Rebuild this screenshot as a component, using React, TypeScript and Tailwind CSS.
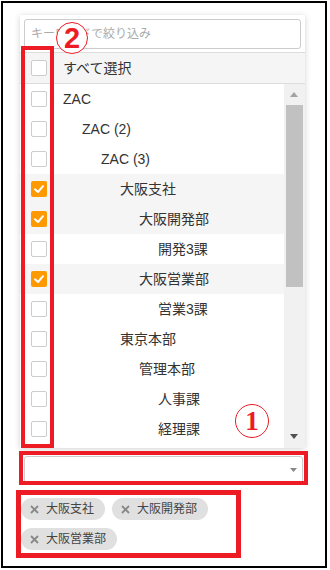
import React from "react";

// ツリー選択の行データ
interface Node {
  label: string;
  level: number;
  checked?: boolean;
  shaded?: boolean;
}

const nodes: Node[] = [
  { label: "ZAC", level: 0 },
  { label: "ZAC (2)", level: 1 },
  { label: "ZAC (3)", level: 2 },
  { label: "大阪支社", level: 3, checked: true, shaded: true },
  { label: "大阪開発部", level: 4, checked: true, shaded: true },
  { label: "開発3課", level: 5 },
  { label: "大阪営業部", level: 4, checked: true, shaded: true },
  { label: "営業3課", level: 5 },
  { label: "東京本部", level: 3 },
  { label: "管理本部", level: 4 },
  { label: "人事課", level: 5 },
  { label: "経理課", level: 5 },
];

const padByLevel = ["pl-[16px]", "pl-[35px]", "pl-[54px]", "pl-[73px]", "pl-[92px]", "pl-[111px]"];

const tags = ["大阪支社", "大阪開発部", "大阪営業部"];

function CheckBox({ checked }: { checked?: boolean }) {
  if (checked) {
    return (
      <span className="w-[16px] h-[16px] shrink-0 rounded-[2px] bg-[#ff9900] flex items-center justify-center">
        <svg width="12" height="12" viewBox="0 0 12 12">
          <polyline points="2,6.3 5,9 10,3.2" fill="none" stroke="#fff" strokeWidth="2" strokeLinecap="round" strokeLinejoin="round" />
        </svg>
      </span>
    );
  }
  return <span className="w-[16px] h-[16px] shrink-0 rounded-[2px] border border-[#cccccc] bg-white" />;
}

export default function App() {
  return (
    <div className="relative w-[330px] h-[570px] bg-white p-[1px] font-[family-name:'Liberation_Sans','Noto_Sans_CJK_JP',sans-serif] text-[#333]">
      <div className="w-[326px] h-[567px] border-2 border-black">
        {/* ドロップダウンパネル */}
        <div className="ml-[17px] mt-[12px] w-[285px] bg-white shadow-[0_1px_6px_rgba(0,0,0,0.18)] pt-[4px]">
          <div className="mx-[4px] h-[30px] border border-[#cccccc] rounded-[3px] flex items-center pl-[6px] text-[12px] leading-none text-[#aaaaaa]">
            キーワードで絞り込み
          </div>
          <div className="mt-[3px] h-[32px] border-y border-[#dddddd] bg-[#f5f5f5] flex items-center pl-[11px]">
            <CheckBox />
            <span className="pl-[16px] text-[14px] leading-none">すべて選択</span>
          </div>
          <div className="flex h-[364px] overflow-hidden">
            <div className="flex-1">
              {nodes.map((n) => (
                <div
                  key={n.label}
                  className={`h-[30px] flex items-center pl-[11px] ${n.shaded ? "bg-[#f5f5f5]" : ""}`}
                >
                  <CheckBox checked={n.checked} />
                  <span className={`${padByLevel[n.level]} text-[14px] leading-none whitespace-nowrap`}>{n.label}</span>
                </div>
              ))}
            </div>
            {/* スクロールバー */}
            <div className="w-[21px] bg-[#f1f1f1] flex flex-col">
              <div className="h-[21px] flex items-center justify-center pr-[2px]">
                <svg width="8" height="5" viewBox="0 0 8 5">
                  <polygon points="0,5 4,0 8,5" fill="#a3a3a3" />
                </svg>
              </div>
              <div className="ml-[2px] w-[17px] h-[182px] bg-[#c1c1c1]" />
              <div className="flex-1" />
              <div className="h-[21px] flex items-center justify-center pr-[2px] pb-[3px]">
                <svg width="8" height="5" viewBox="0 0 8 5">
                  <polygon points="0,0 8,0 4,5" fill="#505050" />
                </svg>
              </div>
            </div>
          </div>
        </div>

        {/* セレクト */}
        <div className="ml-[21px] mt-[8px] w-[279px] h-[28px] border border-[#cccccc] rounded-[3px] bg-white flex items-center justify-end pr-[5px]">
          <svg width="7" height="4" viewBox="0 0 7 4">
            <polygon points="0,0 7,0 3.5,4" fill="#888888" />
          </svg>
        </div>

        {/* 選択済みタグ */}
        <div className="ml-[18px] mt-[14px] w-[210px] flex flex-wrap gap-x-[7px] gap-y-[8px]">
          {tags.map((t) => (
            <div key={t} className="h-[22px] rounded-full bg-[#e0e0e0] flex items-center pl-[9px] pr-[11px] gap-[7px]">
              <svg width="9" height="9" viewBox="0 0 9 9">
                <path d="M1 1L8 8M8 1L1 8" stroke="#888888" strokeWidth="1.8" />
              </svg>
              <span className="text-[12px] leading-none text-[#444]">{t}</span>
            </div>
          ))}
        </div>
      </div>

      {/* 注釈 */}
      <div className="absolute left-[21px] top-[46px] w-[33px] h-[402px] border-[4px] border-[#ed1c24]" />
      <div className="absolute left-[19px] top-[451px] w-[289px] h-[34px] border-[4px] border-[#ed1c24]" />
      <div className="absolute left-[16px] top-[490px] w-[225px] h-[68px] border-[5px] border-[#ed1c24]" />
      <div className="absolute left-[56px] top-[22px] w-[32px] h-[32px] rounded-full border-[1.5px] border-[#ed1c24] bg-white flex items-center justify-center text-[#ed1c24] text-[29px] font-bold leading-none">
        2
      </div>
      <div className="absolute left-[235px] top-[404px] w-[34px] h-[34px] rounded-full border-[1.5px] border-[#ed1c24] bg-white flex items-center justify-center text-[#ed1c24] text-[27px] font-bold leading-none font-[family-name:'Liberation_Serif',serif]">
        1
      </div>
    </div>
  );
}
